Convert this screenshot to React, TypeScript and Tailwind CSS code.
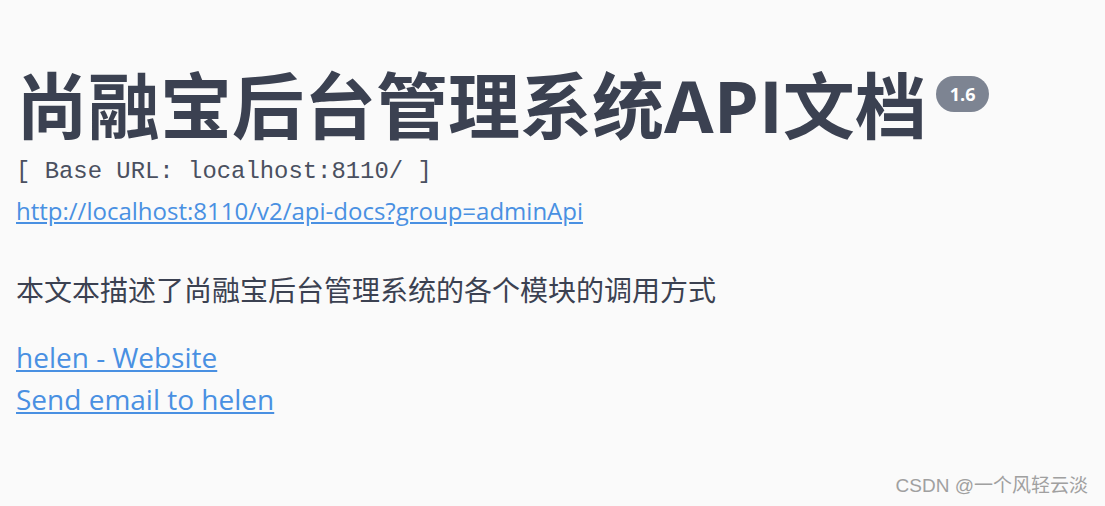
export default function App() {
  return (
    <div className="relative min-h-[506px] w-full bg-[#fafafa] font-['Open_Sans','Noto_Sans_CJK_SC',sans-serif] text-[#3b4151]">
      <div className="flex flex-col px-4 pt-[67px]">
        <div className="flex items-start">
          <h2 className="text-[72px] font-bold leading-[76px]">
            尚融宝后台管理系统API文档
          </h2>
          <span className="ml-[9px] mt-[9px] rounded-full bg-[#7d8492] px-[14px] py-[5px] text-[18px] font-bold leading-[26px] text-white">
            1.6
          </span>
        </div>
        <div className="mt-[14px] font-['Liberation_Mono',monospace] text-[23.9px] leading-[30px] text-[#4a5060]">
          [ Base URL: localhost:8110/ ]
        </div>
        <a
          href="#"
          className="mt-[9px] self-start text-[24px] leading-[30px] text-[#4990e2] underline"
        >
          http://localhost:8110/v2/api-docs?group=adminApi
        </a>
        <p className="mt-[44px] text-[28px] leading-[40px]">
          本文本描述了尚融宝后台管理系统的各个模块的调用方式
        </p>
        <div className="mt-[26px] flex flex-col items-start">
          <a href="#" className="text-[28px] leading-[42px] text-[#4990e2] underline">
            helen - Website
          </a>
          <a href="#" className="text-[28px] leading-[42px] text-[#4990e2] underline">
            Send email to helen
          </a>
        </div>
      </div>
      <div className="absolute bottom-[6px] right-[17px] font-['Liberation_Sans','Noto_Sans_CJK_SC',sans-serif] text-[19px] text-[#a0a0a0]">
        CSDN @一个风轻云淡
      </div>
    </div>
  );
}
